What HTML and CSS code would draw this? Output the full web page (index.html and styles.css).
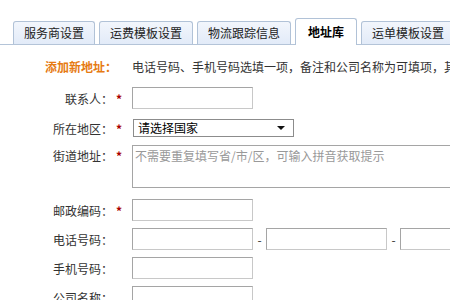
FILE: index.html
```html
<!DOCTYPE html>
<html lang="zh-CN">
<head>
    <meta charset="UTF-8">
    <title>地址库</title>
    <link rel="stylesheet" href="styles.css">
</head>
<body>
    <div class="tabs">
        <div class="tab">服务商设置</div>
        <div class="tab">运费模板设置</div>
        <div class="tab">物流跟踪信息</div>
        <div class="tab active">地址库</div>
        <div class="tab">运单模板设置</div>
    </div>

    <div class="form">
        <div class="row intro">
            <div class="label title">添加新地址：</div>
            <div class="field note">电话号码、手机号码选填一项，备注和公司名称为可填项，其余均为必填项</div>
        </div>
        <div class="row r-name">
            <div class="label">联系人：<span class="req">*</span></div>
            <div class="field"><div class="input"></div></div>
        </div>
        <div class="row r-area">
            <div class="label">所在地区：<span class="req">*</span></div>
            <div class="field">
                <div class="select">请选择国家<span class="arrow"></span></div>
            </div>
        </div>
        <div class="row r-street">
            <div class="label">街道地址：<span class="req">*</span></div>
            <div class="field">
                <div class="textarea">不需要重复填写省/市/区，可输入拼音获取提示</div>
            </div>
        </div>
        <div class="row r-zip">
            <div class="label">邮政编码：<span class="req">*</span></div>
            <div class="field"><div class="input"></div></div>
        </div>
        <div class="row">
            <div class="label">电话号码：<span class="req"></span></div>
            <div class="field">
                <div class="input"></div>
                <span class="dash">-</span>
                <div class="input"></div>
                <span class="dash">-</span>
                <div class="input"></div>
            </div>
        </div>
        <div class="row">
            <div class="label">手机号码：<span class="req"></span></div>
            <div class="field"><div class="input"></div></div>
        </div>
        <div class="row">
            <div class="label">公司名称：<span class="req"></span></div>
            <div class="field"><div class="input"></div></div>
        </div>
    </div>
</body>
</html>
```

FILE: styles.css
```css
* {
    margin: 0;
    padding: 0;
    box-sizing: border-box;
}
body {
    background: #ffffff;
    font-family: "Noto Sans CJK SC", "DejaVu Sans", sans-serif;
    font-size: 12px;
    color: #333;
    overflow: hidden;
    width: 450px;
}
.tabs {
    display: flex;
    align-items: flex-end;
    gap: 4px;
    height: 45px;
    padding-left: 13px;
    border-bottom: 1px solid #b4c4d8;
    white-space: nowrap;
}
.tab {
    flex: none;
    height: 23px;
    line-height: 21px;
    padding: 0 10px;
    background: linear-gradient(#f2f6fc, #e2ebf8);
    border: 1px solid #b1c2d7;
    border-bottom: none;
    border-radius: 3px 3px 0 0;
    color: #222;
    font-size: 12px;
}
.tab.active {
    height: 27px;
    margin-bottom: -1px;
    line-height: 25px;
    padding: 0 12px;
    background: #fff;
    font-weight: bold;
    color: #000;
}
.form {
    padding-top: 11px;
    white-space: nowrap;
}
.row {
    display: flex;
    align-items: center;
    margin-bottom: 7px;
}
.label {
    flex: none;
    width: 125px;
    text-align: right;
    color: #333;
}
.req {
    display: inline-block;
    width: 12px;
    text-align: center;
    color: #a00;
    font-weight: bold;
}
.field {
    display: flex;
    align-items: center;
    margin-left: 7px;
}
.intro {
    margin-bottom: 11px;
    height: 20px;
}
.title {
    color: #e67a12;
    font-weight: bold;
    padding-right: 8px;
}
.note {
    color: #333;
}
.input {
    width: 121px;
    height: 22px;
    border: 1px solid #a5a5a5;
    border-right-color: #c8c8c8;
    border-bottom-color: #c8c8c8;
    background: #fff;
}
.dash {
    width: 13px;
    text-align: center;
    color: #333;
}
.r-area {
    margin-top: 10px;
    margin-bottom: 8px;
}
.select {
    position: relative;
    width: 161px;
    height: 18px;
    margin-left: 1px;
    padding-left: 4px;
    line-height: 16px;
    border: 1px solid #8c8c8c;
    color: #000;
}
.arrow {
    position: absolute;
    right: 8px;
    top: 6px;
    border-left: 4px solid transparent;
    border-right: 4px solid transparent;
    border-top: 4px solid #111;
}
.r-street {
    align-items: flex-start;
    margin-bottom: 11px;
}
.r-street .label {
    padding-top: 2px;
}
.textarea {
    width: 330px;
    height: 43px;
    padding: 1px 2px;
    border: 1px solid #a5a5a5;
    border-right: none;
    color: #999;
    line-height: 18px;
}
```
